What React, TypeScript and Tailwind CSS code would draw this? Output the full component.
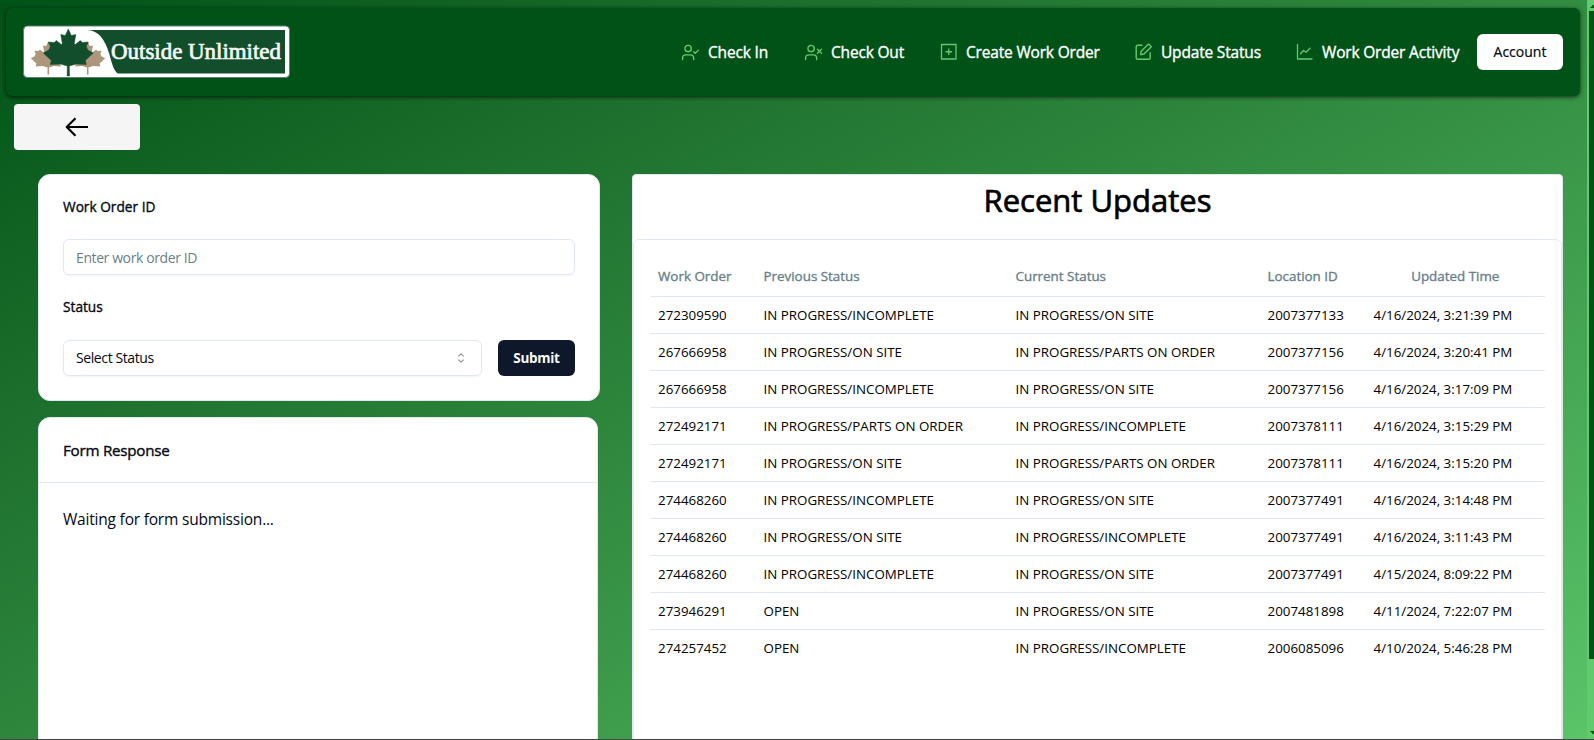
import React from "react";
import { UserCheck, UserX } from "lucide-react";
import { RxCaretSort } from "react-icons/rx";

const rows = [
  ["272309590", "IN PROGRESS/INCOMPLETE", "IN PROGRESS/ON SITE", "2007377133", "4/16/2024, 3:21:39 PM"],
  ["267666958", "IN PROGRESS/ON SITE", "IN PROGRESS/PARTS ON ORDER", "2007377156", "4/16/2024, 3:20:41 PM"],
  ["267666958", "IN PROGRESS/INCOMPLETE", "IN PROGRESS/ON SITE", "2007377156", "4/16/2024, 3:17:09 PM"],
  ["272492171", "IN PROGRESS/PARTS ON ORDER", "IN PROGRESS/INCOMPLETE", "2007378111", "4/16/2024, 3:15:29 PM"],
  ["272492171", "IN PROGRESS/ON SITE", "IN PROGRESS/PARTS ON ORDER", "2007378111", "4/16/2024, 3:15:20 PM"],
  ["274468260", "IN PROGRESS/INCOMPLETE", "IN PROGRESS/ON SITE", "2007377491", "4/16/2024, 3:14:48 PM"],
  ["274468260", "IN PROGRESS/ON SITE", "IN PROGRESS/INCOMPLETE", "2007377491", "4/16/2024, 3:11:43 PM"],
  ["274468260", "IN PROGRESS/INCOMPLETE", "IN PROGRESS/ON SITE", "2007377491", "4/15/2024, 8:09:22 PM"],
  ["273946291", "OPEN", "IN PROGRESS/ON SITE", "2007481898", "4/11/2024, 7:22:07 PM"],
  ["274257452", "OPEN", "IN PROGRESS/INCOMPLETE", "2006085096", "4/10/2024, 5:46:28 PM"],
];

const leaf =
  "M0 -23.5 L3 -17 L7.5 -18 L6 -9 L7 -8 L12 -12 L14 -10 L20 -10.5 L18 -6 L19.500 -2.500 L25 0.500 L17 8 L18 12 L8 11.500 L1 13.500 L1.200 23.500 L-1.200 23.500 L-1 13.500 L-8 11.500 L-18 12 L-17 8 L-25 0.500 L-19.500 -2.500 L-18 -6 L-20 -10.500 L-14 -10 L-12 -12 L-7 -8 L-6 -9 L-7.5 -18 L-3 -17 Z";

function Logo() {
  return (
    <svg width="268" height="54" viewBox="0 0 268 54" className="shrink-0">
      <rect x="0.5" y="1" width="266" height="51.500" rx="4" fill="#fff" stroke="#5f7f78" strokeWidth="1" />
      <path d="M64 5 H262 V48.500 H95 C90 46 88 34 86 28 C82 15 76 5.500 64 5 Z" fill="#134e2c" />
      <g fill="#ad967b">
        <path d={leaf} transform="translate(25.300 33) scale(0.7)" />
        <path d={leaf} transform="translate(64.700 33) scale(0.7)" />
      </g>
      <path d={leaf} transform="translate(45.300 27.500)" fill="#134e2c" stroke="#134e2c" strokeWidth="0.5" />
      <text x="88" y="34" textLength="170" lengthAdjust="spacingAndGlyphs" fill="#f4f7f4" stroke="#f4f7f4" strokeWidth="0.7" className="font-['Liberation_Serif'] text-[23px]">
        Outside Unlimited
      </text>
    </svg>
  );
}

function PlusSquare() {
  return (
    <svg width="20" height="20" viewBox="0 0 20 20" fill="none" stroke="currentColor" strokeWidth="1.3" strokeLinejoin="round">
      <rect x="3.500" y="2.500" width="14.500" height="14.500" />
      <path d="M10.750 6.500v6.500M7.500 9.750h6.500" />
    </svg>
  );
}

function EditSquare() {
  return (
    <svg width="20" height="20" viewBox="0 0 20 20" fill="none" stroke="currentColor" strokeWidth="1.4" strokeLinejoin="round" strokeLinecap="round">
      <path d="M9 3.200H4.700a1.500 1.500 0 0 0-1.500 1.500v11a1.500 1.500 0 0 0 1.500 1.500h11a1.500 1.500 0 0 0 1.500-1.500v-5" />
      <path d="M15.500 1.900l2.800 2.800-7.300 7.300-3.400.600.600-3.400z" />
    </svg>
  );
}

function LineChart() {
  return (
    <svg width="20" height="20" viewBox="0 0 20 20" fill="none" stroke="currentColor" strokeWidth="1.3" strokeLinejoin="round" strokeLinecap="round">
      <path d="M3.500 2.500v14.500H18" />
      <path d="M6.500 11.700l3-3.200 2.500 1.700 4-4" />
    </svg>
  );
}

function BackArrow() {
  return (
    <svg width="24" height="20" viewBox="0 0 24 20" fill="none" stroke="#000" strokeWidth="2.1" strokeLinejoin="round">
      <path d="M10.500 1.200L1.700 10l8.800 8.800M1.700 10H23" />
    </svg>
  );
}

function NavItem({ icon, label, className }: { icon: React.ReactNode; label: string; className: string }) {
  return (
    <a className={`flex items-center gap-2 text-[#5fcb6e] ${className}`}>
      <span className="flex w-5 justify-center">{icon}</span>
      <span className="pt-px text-[15.500px] tracking-[-0.180px] whitespace-nowrap text-white [-webkit-text-stroke:0.35px_white]">{label}</span>
    </a>
  );
}

export default function App() {
  return (
    <div className="flex h-[740px] w-[1594px] flex-col overflow-hidden bg-[#444] font-['Open_Sans','Noto_Sans',sans-serif] text-[#020817]">
      <div className="flex h-[739px] items-start overflow-hidden">
        <div className="h-[822px] w-[1587px] overflow-hidden bg-linear-to-br from-[#005217] to-[#5fcb6e]">
          <header className="mt-2 ml-1.5 flex h-[88px] w-[1574px] items-center rounded-md bg-[#005217] pl-[17px] shadow-[0_1px_4px_rgba(0,0,0,0.7)]">
            <Logo />
            <nav className="ml-[389px] flex items-center">
              <NavItem icon={<UserCheck size={19} strokeWidth={1.7} />} label="Check In" className="w-[123px]" />
              <NavItem icon={<UserX size={19} strokeWidth={1.7} />} label="Check Out" className="w-[135px]" />
              <NavItem icon={<PlusSquare />} label="Create Work Order" className="w-[195px]" />
              <NavItem icon={<EditSquare />} label="Update Status" className="w-[161px]" />
              <NavItem icon={<LineChart />} label="Work Order Activity" className="w-[183px]" />
            </nav>
            <button className="flex h-9 w-[86px] items-center justify-center rounded-md bg-white text-sm [-webkit-text-stroke:0.2px_#020817]">Account</button>
          </header>
          <button className="mt-2 ml-3.5 flex h-[46px] w-[126px] items-center justify-center rounded bg-[#f5f5f5]">
            <BackArrow />
          </button>
          <main className="mt-6 flex items-start pl-[38px]">
            <div className="flex w-[562px] flex-col gap-4">
              <section className="flex h-[227px] flex-col rounded-xl border border-[#e2e8f0] bg-white px-6 pt-[23px]">
                <label className="h-[41px] text-[13.700px] leading-[18px] [-webkit-text-stroke:0.35px_#020817]">Work Order ID</label>
                <div className="flex h-9 items-center rounded-md border border-[#e2e8f0] px-3 pt-0.5 text-sm tracking-[-0.400px] text-[#687f8b] shadow-xs">Enter work order ID</div>
                <label className="mt-[23px] h-[42px] text-[13.700px] leading-[18px] [-webkit-text-stroke:0.35px_#020817]">Status</label>
                <div className="flex gap-4">
                  <div className="flex h-9 w-[419px] items-center justify-between rounded-md border border-[#e2e8f0] px-3 text-sm tracking-[-0.400px] shadow-xs">
                    <span>Select Status</span>
                    <RxCaretSort className="size-4 opacity-50" />
                  </div>
                  <button className="h-9 grow rounded-md bg-[#0f172a] text-[13.500px] font-bold tracking-[-0.300px] text-[#f8fafc]">Submit</button>
                </div>
              </section>
              <section className="h-[400px] w-[560px] rounded-xl border border-[#e2e8f0] bg-white">
                <h3 className="flex h-[65px] items-center border-b border-[#e2e8f0] px-6 text-[15.200px] tracking-[-0.250px] [-webkit-text-stroke:0.35px_#020817]">Form Response</h3>
                <p className="px-6 pt-6 text-[15.500px] leading-6 tracking-[-0.200px]">Waiting for form submission...</p>
              </section>
            </div>
            <section className="ml-8 h-[640px] w-[931px] rounded border border-[#e2e8f0] bg-white">
              <h2 className="h-[64px] pt-[5px] text-center text-[31px] leading-10 text-black [-webkit-text-stroke:0.7px_black]">Recent Updates</h2>
              <div className="h-[600px] rounded-md border border-[#e2e8f0] px-4 pt-4">
                <table className="w-[895px] table-fixed text-left text-[13.350px] text-black">
                  <colgroup>
                    <col className="w-[105.500px]" />
                    <col className="w-[252px]" />
                    <col className="w-[252px]" />
                    <col className="w-[106px]" />
                    <col className="w-[179.500px]" />
                  </colgroup>
                  <thead>
                    <tr className="h-10 border-b border-[#e2e8f0] text-[13.400px] text-[#687f8b] [-webkit-text-stroke:0.35px_#687f8b]">
                      <th className="px-2 font-normal">Work Order</th>
                      <th className="px-2 font-normal">Previous Status</th>
                      <th className="px-2 font-normal">Current Status</th>
                      <th className="px-2 font-normal">Location ID</th>
                      <th className="px-2 text-center font-normal">Updated Time</th>
                    </tr>
                  </thead>
                  <tbody>
                    {rows.map((r, i) => (
                      <tr key={i} className="h-[37px] border-b border-[#e2e8f0] last:h-9 last:border-0">
                        {r.map((c, j) => (
                          <td key={j} className="px-2 pt-0.5 whitespace-nowrap">{c}</td>
                        ))}
                      </tr>
                    ))}
                  </tbody>
                </table>
              </div>
            </section>
          </main>
        </div>
        <div className="flex h-[739px] w-[7px] flex-col items-end justify-between bg-[#5fcb6e]">
          <svg width="5" height="11" viewBox="0 0 5 11" fill="#005217">
            <path d="M1 8L4.500 4.500L5 5V8Z" />
          </svg>
          <div className="h-[648px] w-[5px] bg-[#005217]" />
          <div className="grow" />
          <svg width="5" height="11" viewBox="0 0 5 11" fill="#005217">
            <path d="M1 3H5V6L4.500 6.500Z" />
          </svg>
        </div>
      </div>
    </div>
  );
}
